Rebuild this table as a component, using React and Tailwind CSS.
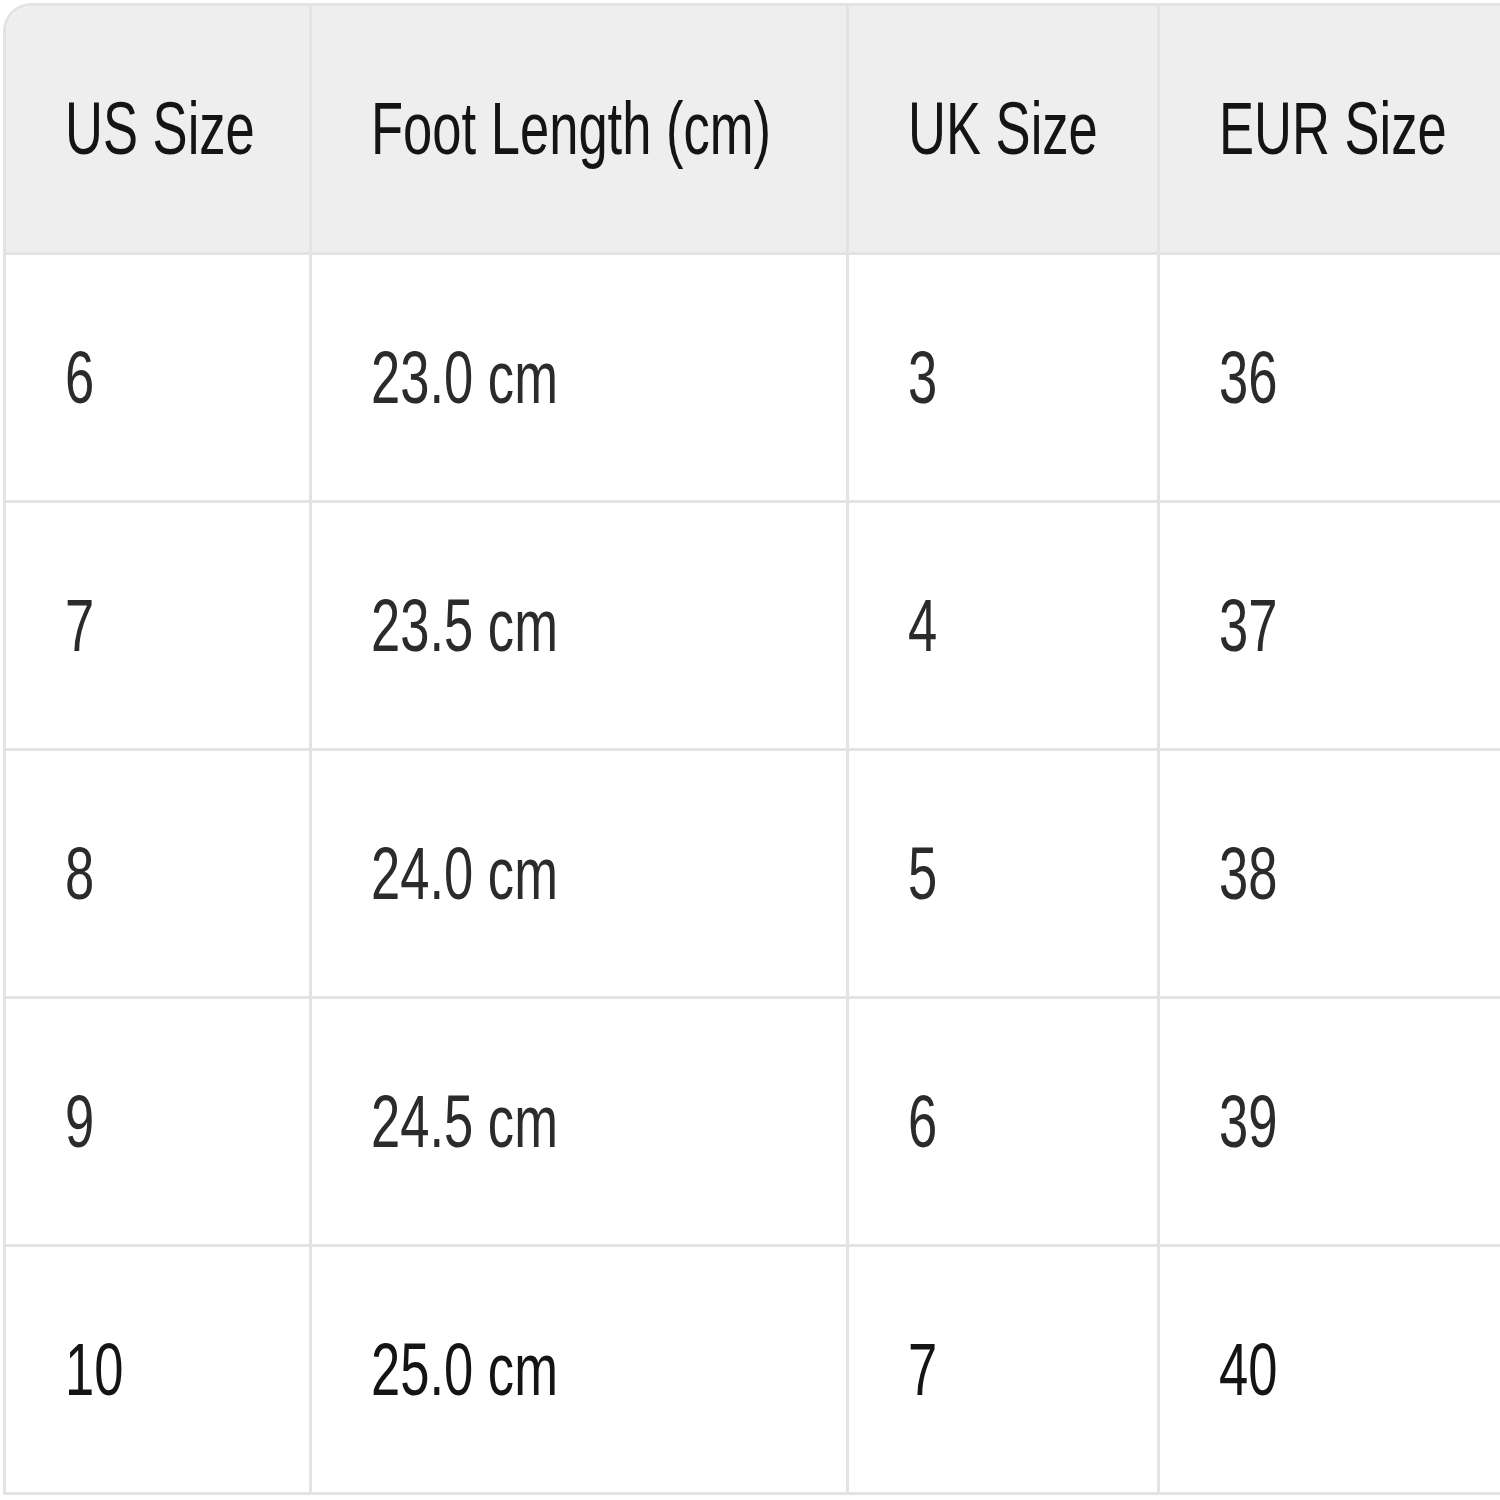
import React from "react";

const headers = ["US Size", "Foot Length (cm)", "UK Size", "EUR Size"];

const rows = [
  ["6", "23.0 cm", "3", "36"],
  ["7", "23.5 cm", "4", "37"],
  ["8", "24.0 cm", "5", "38"],
  ["9", "24.5 cm", "6", "39"],
  ["10", "25.0 cm", "7", "40"],
];

const colClass = ["w-[306px]", "w-[537px]", "w-[311px]", "w-[400px]"];

const Cell = ({ children, i, head, last }) => (
  <div
    className={`${colClass[i]} shrink-0 flex items-center pl-[59px] border-r-[3px] border-b-[3px] border-[#e3e3e3] ${
      head ? "h-[249px] bg-[#eeeeee]" : "h-[248px] bg-white"
    } ${i === 0 && head ? "rounded-tl-[26px]" : ""}`}
  >
    <span
      className={`inline-block origin-left scale-x-[0.71] whitespace-nowrap text-[74px] leading-none ${
        head || last ? "text-[#141414]" : "text-[#2b2b2b]"
      }`}
    >
      {children}
    </span>
  </div>
);

const App = () => {
  return (
    <div className="w-[1500px] h-[1500px] overflow-hidden bg-white font-['Liberation_Sans',Arial,sans-serif]">
      <div className="ml-[3px] mt-[3px] w-[1600px] border-l-[3px] border-t-[3px] border-[#e3e3e3] rounded-tl-[28px]">
        <div className="flex">
          {headers.map((h, i) => (
            <Cell key={h} i={i} head>
              {h}
            </Cell>
          ))}
        </div>
        {rows.map((r, ri) => (
          <div key={ri} className="flex">
            {r.map((c, i) => (
              <Cell key={i} i={i} last={ri === rows.length - 1}>
                {c}
              </Cell>
            ))}
          </div>
        ))}
      </div>
    </div>
  );
};

export default App;
